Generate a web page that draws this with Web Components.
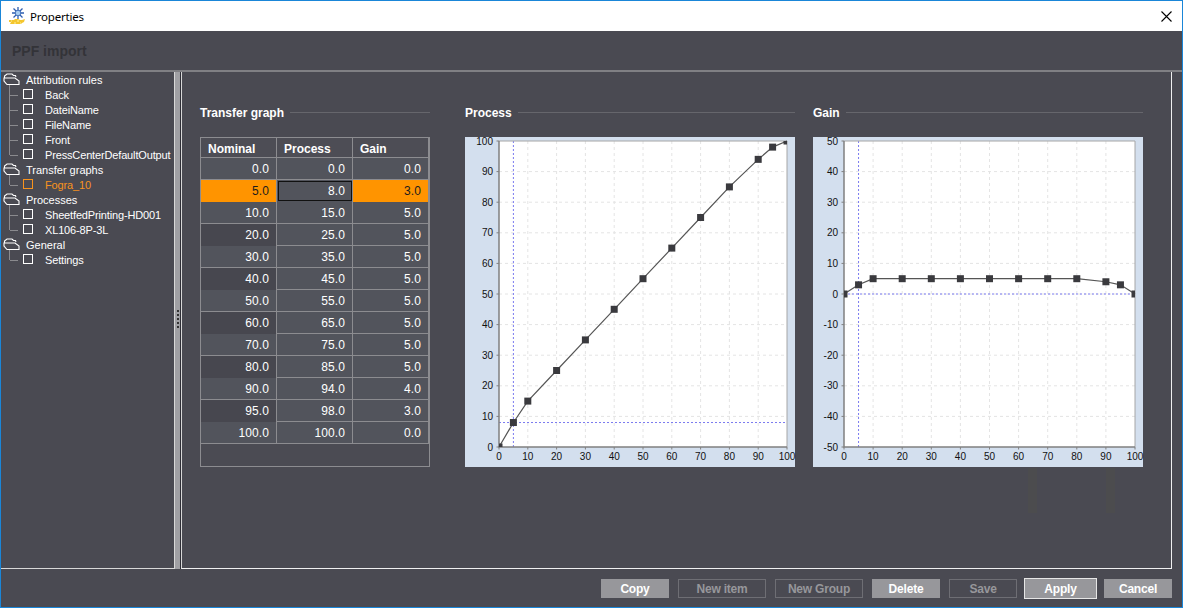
<!DOCTYPE html>
<html>

<head>
  <title>Properties</title>
  <style>
    html, body { margin: 0; height: 100%; background: #4a4a52; overflow: hidden; }
  </style>
</head>

<body>
  <properties-window></properties-window>

  <script>
    const UI_FONT = '"Liberation Sans", Arial, sans-serif';

    class TitleBar extends HTMLElement {
      constructor() {
        super();
        this.attachShadow({ mode: 'open' });
        this.shadowRoot.innerHTML = `<style>
          :host { display: flex; align-items: center; height: 30px; background: #fff; color: #000; font: 11.5px "Noto Sans", sans-serif; letter-spacing: -.2px; }
          svg { display: block; }
          .logo { margin: 0 4px 0 8px; }
          .title { flex: 1; }
          .close { margin-right: 10px; }
        </style>
        <svg class="logo" width="17" height="18" viewBox="0 0 17 18">
          <g stroke="#2f5fb0" stroke-width="1.3"><path d="M9 0v12M3 6h12M4.5 1.500l9 9M13.500 1.500l-9 9"/></g>
          <circle cx="9" cy="6" r="2.800" fill="#a8cdf0" stroke="#2f5fb0" stroke-width=".8"/>
          <path d="M0 13h5l1-1h3l2 1h2l3-1-1 3-2 1-1 1H1l1-2H0z" fill="#f4c62e"/>
          <path d="M2 14h1M5 16h2M8 14h2M11 16h1" stroke="#fff3a0"/>
        </svg>
        <span class="title">Properties</span>
        <svg class="close" width="11" height="11" viewBox="0 0 11 11"><path d="M.5.5l10 10M10.500.5l-10 10" stroke="#000" stroke-width="1.1" fill="none"/></svg>`;
      }
    }

    class TreeGroup extends HTMLElement {
      constructor() {
        super();
        this.attachShadow({ mode: 'open' });
        this.shadowRoot.innerHTML = `<style>
          :host { display: block; position: relative; }
          .head { display: flex; align-items: center; height: 15px; }
          svg { display: block; margin: 0 6px 0 2px; }
          .kids { display: block; }
          .rail { position: absolute; left: 8px; top: 13px; bottom: 7px; border-left: 1px solid #8a8a8e; }
        </style>
        <div class="head">
          <svg width="17" height="13" viewBox="0 0 17 13"><path d="M1.500 4.500V3L4 1h5l1.500 1.500h2L13 4M1 5h11l4 3v3.500H4L1 8z" fill="none" stroke="#fff" stroke-width="1.1"/></svg>
          <span></span>
        </div>
        <div class="rail"></div>
        <slot class="kids"></slot>`;
        this.shadowRoot.querySelector('span').textContent = this.getAttribute('label');
      }
    }

    class TreeLeaf extends HTMLElement {
      constructor() {
        super();
        this.attachShadow({ mode: 'open' });
        this.shadowRoot.innerHTML = `<style>
          :host { display: flex; align-items: center; height: 15px; position: relative; padding-left: 22px; white-space: nowrap; letter-spacing: -.15px; }
          :host([selected]) { color: #f7931e; }
          .dash { position: absolute; left: 9px; top: 8px; width: 8px; border-top: 1px solid #8a8a8e; }
          .box { flex: none; width: 8px; height: 8px; border: 1px solid currentColor; margin-right: 12px; position: relative; top: -1px; }
          :host(:not([selected])) .box { border-color: #fff; }
        </style>
        <div class="dash"></div><div class="box"></div><slot></slot>`;
      }
    }

    class GraphTable extends HTMLElement {
      constructor() {
        super();
        this.attachShadow({ mode: 'open' });
        const rows = [
          [0, 0, 0], [5, 8, 3], [10, 15, 5], [20, 25, 5], [30, 35, 5], [40, 45, 5], [50, 55, 5],
          [60, 65, 5], [70, 75, 5], [80, 85, 5], [90, 94, 4], [95, 98, 3], [100, 100, 0]
        ];
        const body = rows.map((r, i) => {
          const cls = i === 1 ? 'sel' : (i % 2 ? 'odd' : '');
          return `<div class="row ${cls}">` + r.map(v => `<div class="cell">${v.toFixed(1)}</div>`).join('') + '</div>';
        }).join('');
        this.shadowRoot.innerHTML = `<style>
          :host { display: flex; flex-direction: column; width: 230px; height: 330px; box-sizing: border-box; border: 1px solid #8c8c90; font-size: 12px; color: #fff; background: #4b4b53; }
          .row { display: grid; grid-template-columns: 76px 76px 76px; height: 22px; box-sizing: border-box; border-bottom: 1px solid #8c8c90; background: #52545c; }
          .row.head { height: 20px; font-weight: bold; background: #4d4d55; font-size: 12px; }
          .row.odd .cell:first-child { background: #47474f; }
          .cell { box-sizing: border-box; border-right: 1px solid #8c8c90; line-height: 22px; text-align: right; padding-right: 7px; letter-spacing: .1px; }
          .head .cell { text-align: left; padding-left: 7px; line-height: 23px; letter-spacing: 0; }
          .sel .cell { background: #ff9400; color: #1c1c1c; }
          .sel .cell:nth-child(2) { background: #52545c; color: #fff; outline: 1px solid #111; outline-offset: -2px; }
        </style>
        <div class="row head"><div class="cell">Nominal</div><div class="cell">Process</div><div class="cell">Gain</div></div>
        ${body}`;
      }
    }

    class SectionTitle extends HTMLElement {
      constructor() {
        super();
        this.attachShadow({ mode: 'open' });
        this.shadowRoot.innerHTML = `<style>
          :host { display: flex; align-items: center; gap: 6px; height: 15px; margin-bottom: 17px; font-size: 12px; font-weight: bold; color: #fff; }
          i { flex: 1; border-top: 1px solid #66666c; }
        </style><slot></slot><i></i>`;
      }
    }

    // plots are drawn on a free svg canvas, coordinates relative to the 330x330 panel
    class ChartPanel extends HTMLElement {
      constructor() {
        super();
        this.attachShadow({ mode: 'open' });
      }

      connectedCallback() {
        const xs = [0, 5, 10, 20, 30, 40, 50, 60, 70, 80, 90, 95, 100];
        const ys = this.getAttribute('values').split(',').map(Number);
        const min = Number(this.getAttribute('min'));
        const max = Number(this.getAttribute('max'));
        const left = Number(this.getAttribute('left'));
        const right = Number(this.getAttribute('right'));
        const id = this.getAttribute('clip');
        const top = 4, bottom = 310;
        const px = v => left + v * (right - left) / 100;
        const py = v => bottom - (v - min) * (bottom - top) / (max - min);
        let grid = '', labels = '';

        for (let v = 0; v <= 100; v += 10) {
          if (v > 0 && v < 100) grid += `<path d="M${px(v)} ${top}V${bottom}" class="grid"/>`;
          grid += `<path d="M${px(v)} ${bottom}v2.500" class="tick"/>`;
          labels += `<text x="${px(v)}" y="${bottom + 13}" text-anchor="middle">${v}</text>`;
        }
        for (let v = min; v <= max; v += 10) {
          if (v > min && v < max) grid += `<path d="M${left} ${py(v)}H${right}" class="grid"/>`;
          grid += `<path d="M${left - 2.500} ${py(v)}h2.500" class="tick"/>`;
          labels += `<text x="${left - 6}" y="${py(v) + 3.500}" text-anchor="end">${v}</text>`;
        }

        const line = xs.map((x, i) => px(x) + ',' + py(ys[i])).join(' ');
        const dots = xs.map((x, i) => {
          return `<rect x="${px(x) - 3.500}" y="${py(ys[i]) - 3.500}" width="7" height="7" fill="#3a3a3e"/>`;
        }).join('');

        this.shadowRoot.innerHTML = `<style>
          :host { display: block; width: 330px; height: 330px; background: #d3dfee; }
          svg { display: block; overflow: visible; }
          text { font: 10px ${UI_FONT}; fill: #111; }
          .grid { stroke: #e4e4e4; stroke-dasharray: 3 3; fill: none; }
          .tick { stroke: #808080; fill: none; }
          .cross { stroke: #7a7af0; stroke-dasharray: 2 2; fill: none; }
        </style>
        <svg width="330" height="330" viewBox="0 0 330 330">
          <clipPath id="${id}"><rect x="${left}" y="${top}" width="${right - left}" height="${bottom - top}"/></clipPath>
          <rect x="${left}" y="${top}" width="${right - left}" height="${bottom - top}" fill="#fff"/>
          ${grid}
          <path d="M${px(5)} ${top}V${bottom}M${left} ${py(ys[1] === 8 ? 8 : 0)}H${right}" class="cross"/>
          <path d="M${left} ${top}H${right}V${bottom}" fill="none" stroke="#a6a6a6"/>
          <path d="M${left} ${top}V${bottom}H${right}" fill="none" stroke="#808080" stroke-width="1.5"/>
          <polyline points="${line}" fill="none" stroke="#555" stroke-width="1.2"/>
          <g clip-path="url(#${id})">${dots}</g>
          ${labels}
        </svg>`;
      }
    }

    class ActionButton extends HTMLElement {
      constructor() {
        super();
        this.attachShadow({ mode: 'open' });
        this.shadowRoot.innerHTML = `<style>
          :host { display: flex; align-items: center; justify-content: center; box-sizing: border-box; height: 19px; width: 68px; font-size: 12px; font-weight: bold; letter-spacing: -.2px; color: #fff; background: #97979b; }
          :host([off]) { background: none; border: 1px solid #6e6e74; color: #97979b; }
          :host([wide]) { width: 88px; }
          :host([focus]) { border: 1px solid #e6e6e6; height: 21px; width: 73px; margin: 0 -2px; }
        </style><slot></slot>`;
      }
    }

    class PropertiesWindow extends HTMLElement {
      constructor() {
        super();
        this.attachShadow({ mode: 'open' });
        this.shadowRoot.innerHTML = `<style>
          :host { display: flex; flex-direction: column; box-sizing: border-box; width: 1183px; height: 608px; border: 1px solid #1a86d8; background: #4a4a52; font: 11px ${UI_FONT}; color: #fff; }
          .head { height: 39px; box-sizing: border-box; padding: 12px 0 0 11px; font-size: 14px; font-weight: bold; color: #333338; }
          .main { display: flex; flex: 1; min-height: 0; border-top: 2px solid #808084; }
          .nav { width: 174px; height: 497px; box-sizing: border-box; border-right: 1px solid #d8d8d8; border-bottom: 1px solid #d8d8d8; }
          .split { width: 5px; height: 497px; background: #a0a0a4; position: relative; border-right: 1px solid #2e2e36; }
          .grip { position: absolute; left: 2px; top: 238px; width: 2px; height: 18px; background: repeating-linear-gradient(#333 0 2px, transparent 2px 4px); }
          .pane { flex: none; width: 991px; height: 497px; box-sizing: border-box; border: 1px solid #f0f0f0; border-top: 0; border-left-color: #d8d8d8; position: relative; display: flex; padding: 33px 0 0 18px; }
          .col { flex: none; width: 230px; }
          .col.p { margin-left: 35px; width: 330px; }
          .col.g { margin-left: 18px; width: 330px; }
          .ghost { position: absolute; top: 396px; width: 9px; height: 45px; background: #4c4c4e; }
          .foot { display: flex; justify-content: flex-end; align-items: center; gap: 9px; height: 37px; padding-right: 10px; }
        </style>
        <title-bar></title-bar>
        <div class="head">PPF import</div>
        <div class="main">
          <div class="nav">
            <tree-group label="Attribution rules">
              <tree-leaf>Back</tree-leaf>
              <tree-leaf>DateiName</tree-leaf>
              <tree-leaf>FileName</tree-leaf>
              <tree-leaf>Front</tree-leaf>
              <tree-leaf>PressCenterDefaultOutput</tree-leaf>
            </tree-group>
            <tree-group label="Transfer graphs">
              <tree-leaf selected>Fogra_10</tree-leaf>
            </tree-group>
            <tree-group label="Processes">
              <tree-leaf>SheetfedPrinting-HD001</tree-leaf>
              <tree-leaf>XL106-8P-3L</tree-leaf>
            </tree-group>
            <tree-group label="General">
              <tree-leaf>Settings</tree-leaf>
            </tree-group>
          </div>
          <div class="split"><div class="grip"></div></div>
          <div class="pane">
            <div class="col">
              <section-title>Transfer graph</section-title>
              <graph-table></graph-table>
            </div>
            <div class="col p">
              <section-title>Process</section-title>
              <chart-panel clip="clipP" min="0" max="100" left="34" right="322" values="0,8,15,25,35,45,55,65,75,85,94,98,100"></chart-panel>
            </div>
            <div class="col g">
              <section-title>Gain</section-title>
              <chart-panel clip="clipG" min="-50" max="50" left="31" right="322" values="0,3,5,5,5,5,5,5,5,5,4,3,0"></chart-panel>
            </div>
            <div class="ghost" style="left: 846px"></div>
            <div class="ghost" style="left: 924px"></div>
          </div>
        </div>
        <div class="foot">
          <action-button>Copy</action-button>
          <action-button off wide>New item</action-button>
          <action-button off wide>New Group</action-button>
          <action-button>Delete</action-button>
          <action-button off>Save</action-button>
          <action-button focus>Apply</action-button>
          <action-button>Cancel</action-button>
        </div>`;
      }
    }

    customElements.define('title-bar', TitleBar);
    customElements.define('tree-group', TreeGroup);
    customElements.define('tree-leaf', TreeLeaf);
    customElements.define('graph-table', GraphTable);
    customElements.define('section-title', SectionTitle);
    customElements.define('chart-panel', ChartPanel);
    customElements.define('action-button', ActionButton);
    customElements.define('properties-window', PropertiesWindow);
  </script>
</body>

</html>
